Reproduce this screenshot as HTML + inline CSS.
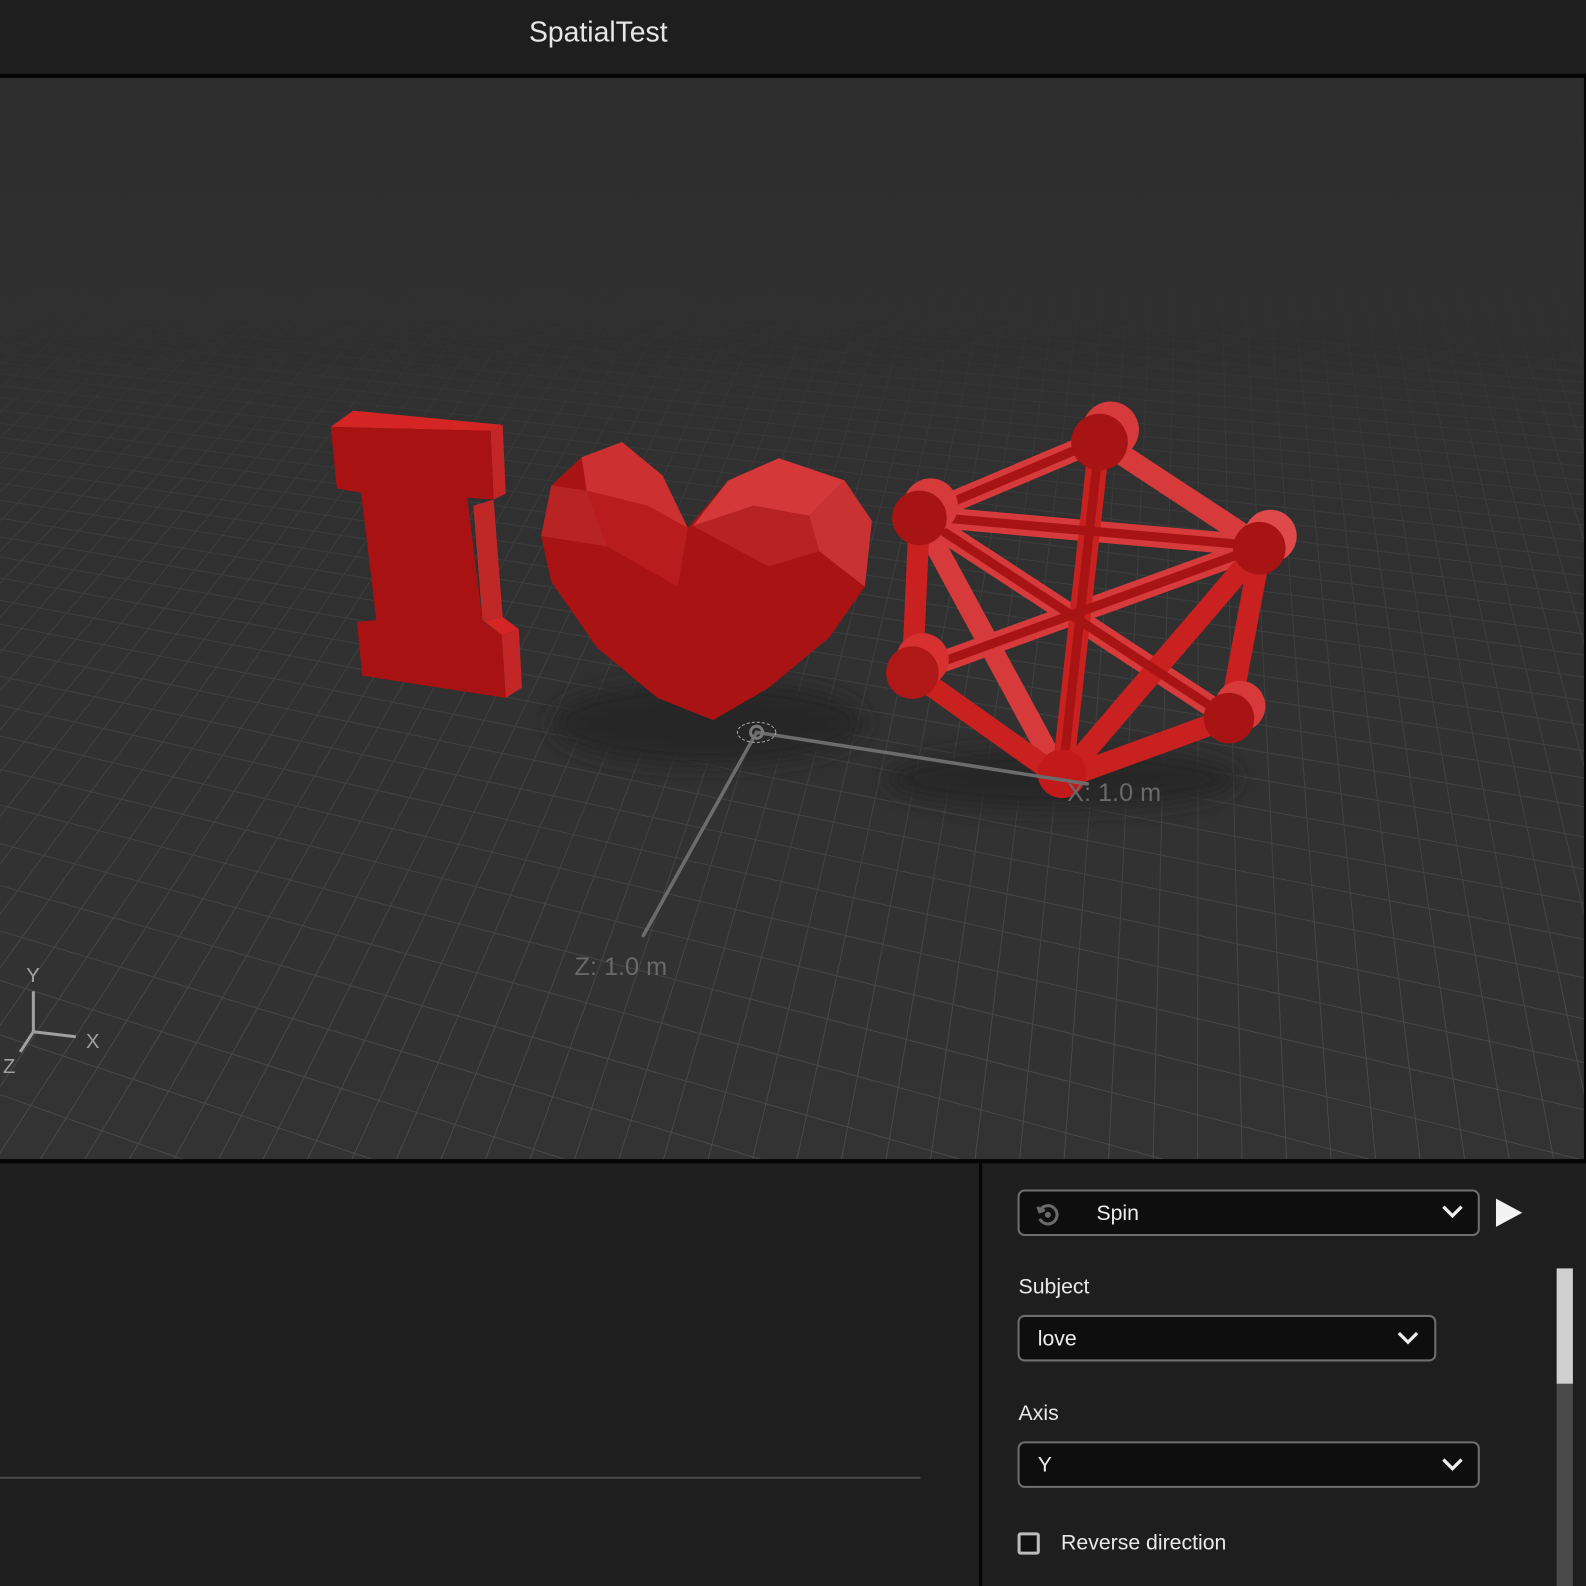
<!DOCTYPE html>
<html><head><meta charset="utf-8"><style>
html,body{margin:0;padding:0;background:#1e1e1e;width:1586px;height:1586px;overflow:hidden;font-family:"Liberation Sans",sans-serif}
#w{position:absolute;left:0;top:0;width:1568px;height:1568px;transform:scale(1.01148);transform-origin:0 0;background:#1e1e1e;overflow:hidden}
.abs{position:absolute}
.title{left:0;width:1183px;top:16px;text-align:center;color:#e6e6e6;font-size:28px}
.dd{position:absolute;left:1006px;background:#0e0e0e;border:2px solid #6e6e6e;border-radius:7px;box-sizing:border-box;height:46px}
.dd span{position:absolute;top:10px;color:#eee;font-size:21px}
.lbl{position:absolute;left:1007px;color:#e8e8e8;font-size:21px}
</style></head><body><div id="w">
<div class="abs title">SpatialTest</div>
<div class="abs" style="left:0;top:73px;width:1568px;height:4px;background:#050505"></div>
<svg class="abs" style="left:0;top:77px" width="1566" height="1069" viewBox="0 77 1566 1069">
<defs>
<linearGradient id="bg" x1="0" y1="0" x2="0" y2="1"><stop offset="0" stop-color="#2e2e2e"/><stop offset="1" stop-color="#333"/></linearGradient>
<linearGradient id="fade" x1="0" y1="77" x2="0" y2="1146" gradientUnits="userSpaceOnUse"><stop offset="0.18" stop-color="#fff" stop-opacity="0"/><stop offset="0.4" stop-color="#fff" stop-opacity="0.45"/><stop offset="1" stop-color="#fff" stop-opacity="1"/></linearGradient>
<mask id="m"><rect x="0" y="77" width="1566" height="1069" fill="url(#fade)"/></mask>
<filter id="bl" x="-50%" y="-50%" width="200%" height="200%"><feGaussianBlur stdDeviation="10"/></filter>
</defs>
<rect x="0" y="77" width="1566" height="1069" fill="url(#bg)"/>
<g id="grid" mask="url(#m)" stroke="#4a4a4a" stroke-width="1" fill="none"></g>
<ellipse cx="700" cy="715" rx="155" ry="42" fill="#262626" filter="url(#bl)"/>
<ellipse cx="1050" cy="770" rx="175" ry="30" fill="#272727" filter="url(#bl)"/>
<polygon points="327,422 349,406 497,420 485,426" fill="#d42424"/>
<polygon points="485,426 497,420 500,488 488,494" fill="#c32626"/>
<polygon points="468,500 488,494 497,610 477,614" fill="#c02828"/>
<polygon points="478,614 497,610 513,622 496,628" fill="#d42424"/>
<polygon points="496,628 513,622 516,680 500,690" fill="#c32626"/>
<polygon points="327,422 485,426 488,494 462,492 477,614 496,628 500,690 358,668 353,615 372,613 357,487 333,483" fill="#a81212"/>
<polygon points="680,522 655,470 615,437 575,452 545,480 535,530 545,575 590,640 650,690 705,712 760,680 820,630 855,580 862,515 835,475 770,453 720,475" fill="#a91313"/>
<polygon points="615,437 575,452 580,485 640,500 680,522 655,470" fill="#cc3030"/>
<polygon points="640,500 680,522 670,580 600,540 580,485" fill="#b91c1c"/>
<polygon points="720,475 770,453 835,475 800,510 745,500 685,520" fill="#d43838"/>
<polygon points="800,510 835,475 862,515 855,580 810,545" fill="#c83232"/>
<polygon points="745,500 800,510 810,545 760,560 685,520" fill="#b72222"/>
<polygon points="545,480 580,485 600,540 535,530" fill="#b82424"/>
<g stroke-linecap="butt" fill="none">
<g stroke="#d63a3a" stroke-width="21">
<line x1="1087" y1="435" x2="909" y2="510"/><line x1="1087" y1="435" x2="1247" y2="540"/>
<line x1="909" y1="510" x2="1247" y2="540"/><line x1="909" y1="510" x2="1215" y2="710"/>
<line x1="909" y1="510" x2="1050" y2="770"/><line x1="1247" y1="540" x2="902" y2="665"/>
</g>
<g stroke="#c92020" stroke-width="21">
<line x1="909" y1="510" x2="902" y2="665"/><line x1="1247" y1="540" x2="1215" y2="710"/>
<line x1="902" y1="665" x2="1050" y2="770"/><line x1="1215" y1="710" x2="1050" y2="770"/>
<line x1="1247" y1="540" x2="1050" y2="770"/><line x1="1087" y1="435" x2="1050" y2="770"/>
</g>
<g stroke="#a81414" stroke-width="9">
<line x1="1087" y1="435" x2="909" y2="510"/><line x1="909" y1="510" x2="1247" y2="540"/>
<line x1="1087" y1="435" x2="1050" y2="770"/><line x1="1247" y1="540" x2="902" y2="665"/>
<line x1="909" y1="510" x2="1215" y2="710"/>
</g>
</g>
<g>
<circle cx="1098" cy="425" r="28" fill="#d63a3a"/><circle cx="1087" cy="437" r="28" fill="#a81414"/>
<circle cx="920" cy="500" r="27" fill="#d63a3a"/><circle cx="909" cy="512" r="27" fill="#a81414"/>
<circle cx="1256" cy="530" r="26" fill="#de4a4a"/><circle cx="1245" cy="542" r="26" fill="#a81414"/>
<circle cx="912" cy="652" r="26" fill="#d63030"/><circle cx="902" cy="665" r="26" fill="#b01717"/>
<circle cx="1226" cy="698" r="25" fill="#d63a3a"/><circle cx="1215" cy="710" r="25" fill="#a81414"/>
<circle cx="1050" cy="765" r="24" fill="#c21a1a"/>
</g>
<g stroke="#6c6c6c" stroke-width="3.5" stroke-linecap="round">
<line x1="748" y1="724" x2="1075" y2="775"/><line x1="748" y1="724" x2="636" y2="925"/>
</g>
<ellipse cx="748" cy="724" rx="19" ry="10" fill="none" stroke="#aaa" stroke-width="1" stroke-dasharray="3 2"/>
<circle cx="748" cy="724" r="6" fill="none" stroke="#777" stroke-width="3"/>
<text x="1055" y="792" fill="#696969" font-size="25" font-family="Liberation Sans">X:  1.0 m</text>
<text x="568" y="964" fill="#696969" font-size="25" font-family="Liberation Sans">Z:  1.0 m</text>
<g stroke="#a0a0a0" stroke-width="3" fill="none"><line x1="33" y1="980" x2="33" y2="1020"/><line x1="33" y1="1020" x2="75" y2="1025"/><line x1="33" y1="1020" x2="20" y2="1040"/></g>
<g fill="#a0a0a0" font-size="20" font-family="Liberation Sans"><text x="26" y="971">Y</text><text x="85" y="1036">X</text><text x="3" y="1061">Z</text></g>
</svg>
<div class="abs" style="left:1566px;top:73px;width:2px;height:1077px;background:#050505"></div>
<div class="abs" style="left:0;top:1146px;width:1568px;height:4px;background:#050505"></div>
<div class="abs" style="left:968px;top:1150px;width:3px;height:418px;background:#050505"></div>
<div class="abs" style="left:0;top:1460px;width:910px;height:2px;background:#4a4a4a"></div>
<div class="dd" style="top:1176px;width:457px"><svg class="abs" style="left:15px;top:10px" width="26" height="26" viewBox="0 0 26 26" fill="none" stroke="#6a6a6a" stroke-width="3"><path d="M5 9 A9 9 0 1 1 5 17"/><path d="M3 5 L5 10 L10 8"/><circle cx="13" cy="13" r="1.5" fill="#6a6a6a"/></svg><span style="left:76px">Spin</span></div>
<svg class="abs" style="left:1424px;top:1188px" width="24" height="20" viewBox="0 0 24 20"><path d="M3 5 L12 14 L21 5" fill="none" stroke="#eee" stroke-width="3.2"/></svg>
<svg class="abs" style="left:1476px;top:1183px" width="32" height="32" viewBox="0 0 32 32"><path d="M3 2 L29 16 L3 30 Z" fill="#f2f2f2"/></svg>
<div class="lbl" style="top:1261px">Subject</div>
<div class="dd" style="top:1300px;width:414px"><span style="left:18px">love</span></div>
<svg class="abs" style="left:1380px;top:1313px" width="24" height="20" viewBox="0 0 24 20"><path d="M3 5 L12 14 L21 5" fill="none" stroke="#eee" stroke-width="3.2"/></svg>
<div class="lbl" style="top:1386px">Axis</div>
<div class="dd" style="top:1425px;width:457px"><span style="left:18px">Y</span></div>
<svg class="abs" style="left:1424px;top:1438px" width="24" height="20" viewBox="0 0 24 20"><path d="M3 5 L12 14 L21 5" fill="none" stroke="#eee" stroke-width="3.2"/></svg>
<div class="abs" style="left:1006px;top:1515px;width:22px;height:22px;box-sizing:border-box;border:3px solid #bbb;border-radius:3px;background:#111"></div>
<div class="abs" style="left:1049px;top:1514px;color:#e8e8e8;font-size:21px">Reverse direction</div>
<div class="abs" style="left:1539px;top:1254px;width:16px;height:314px;background:#4a4a4a"></div>
<div class="abs" style="left:1539px;top:1254px;width:16px;height:114px;background:#d0d0d0"></div>
</div>
<script>
var g=document.getElementById('grid'),s='';
var vx=1186,vy=-692;
for(var x=-1500;x<=2600;x+=44){var t=(280-1146)/(vy-1146);var x2=x+(vx-x)*t;s+='<line x1="'+x+'" y1="1146" x2="'+x2.toFixed(1)+'" y2="280"/>';}
var h2x=-3000,h2y=20,A=30600,hh=-200;
for(var d=20;d<=80;d++){var y0=hh+A/d;if(y0<290)break;var sl=(y0-h2y)/(700-h2x);var yl=y0-sl*700,yr=y0+sl*866;s+='<line x1="0" y1="'+yl.toFixed(1)+'" x2="1566" y2="'+yr.toFixed(1)+'"/>';}
g.innerHTML=s;
</script>
</body></html>
